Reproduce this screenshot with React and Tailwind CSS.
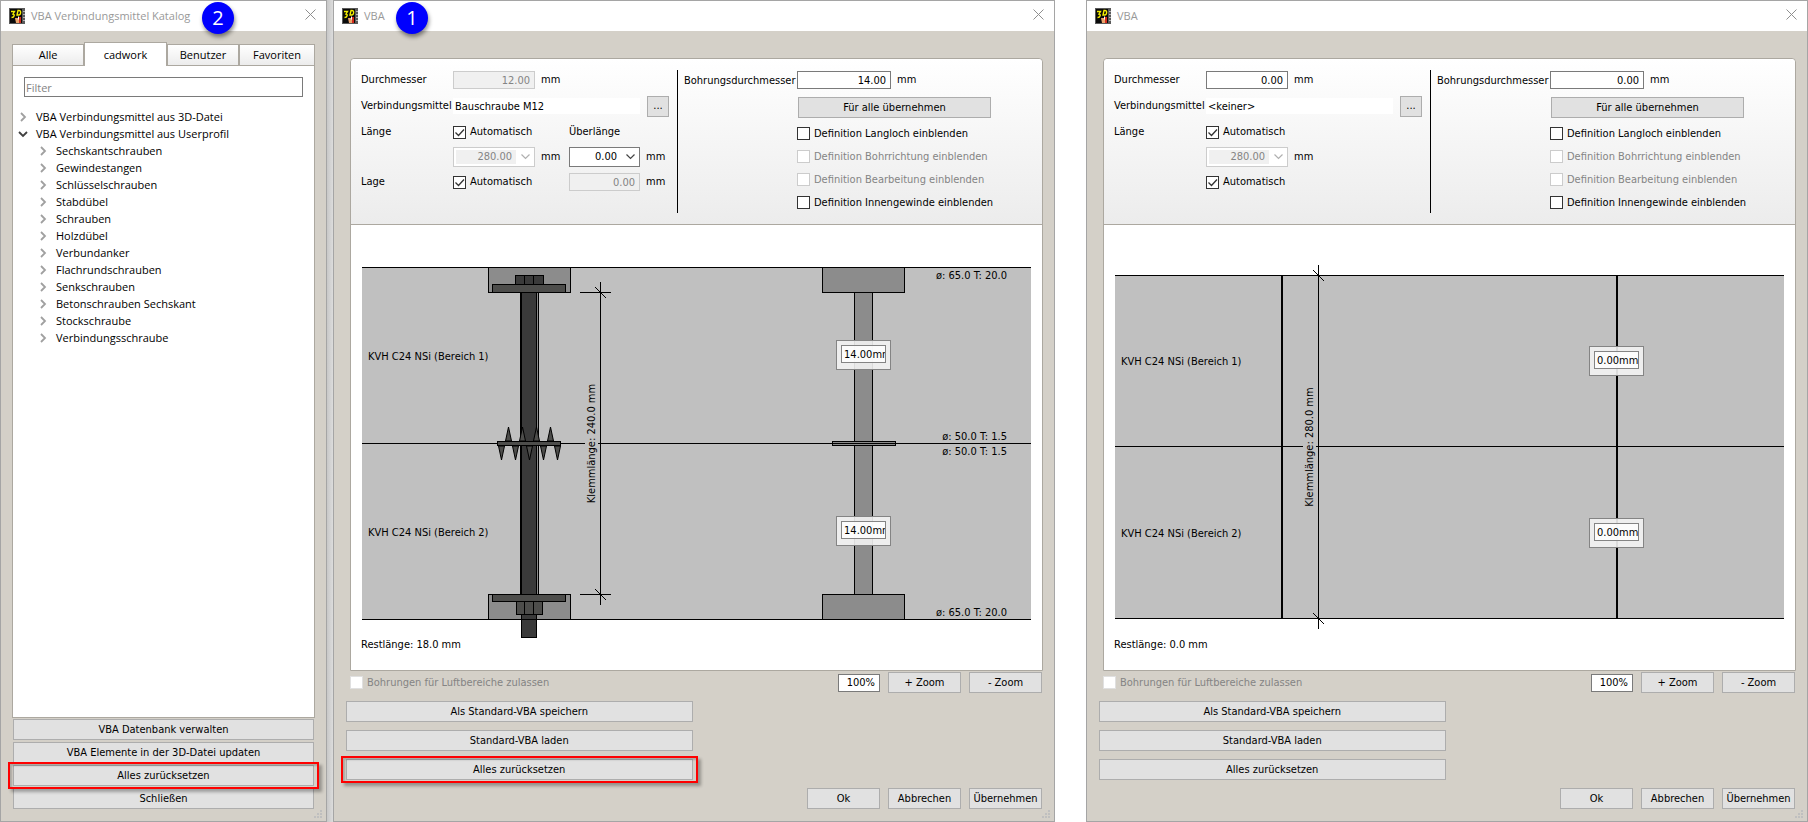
import React, { useState } from 'react';
import clsx from 'clsx';

const TREE_ITEMS = [
  'Sechskantschrauben',
  'Gewindestangen',
  'Schlüsselschrauben',
  'Stabdübel',
  'Schrauben',
  'Holzdübel',
  'Verbundanker',
  'Flachrundschrauben',
  'Senkschrauben',
  'Betonschrauben Sechskant',
  'Stockschraube',
  'Verbindungsschraube',
];

const TABS = [
  { name: 'Alle', width: 'flex-[72]' },
  { name: 'cadwork', width: 'flex-[83]' },
  { name: 'Benutzer', width: 'flex-[72]' },
  { name: 'Favoriten', width: 'flex-[76]' },
];

const AppIcon = () => (
  <svg width="16" height="16" viewBox="0 0 16 16" className="shrink-0" aria-hidden="true">
    <rect width="16" height="16" fill="#5a5a5a" />
    <rect x="1" y="1" width="12" height="14" fill="#0a0a0a" />
    <path d="M14 3.5h2M14 6.5h2M14 9.5h2M14 12.5h2" stroke="#b5b5b5" />
    <path d="M2 3.500h3.500L4 6c2 0 1.500 3.500-1.500 3.500M9 2.500h1c2.500 0 2 4.500-.5 4.500H8z" fill="none" stroke="#f5ee00" strokeWidth="1.400" />
    <path d="M6 10h4v5H7z" fill="#e9a36b" />
    <path d="M10 9h2v6h-2z" fill="#d42a1c" />
    <path d="M9.500 8.500v3" stroke="#fff" />
  </svg>
);

const CloseIcon = () => (
  <svg width="11" height="11" viewBox="0 0 11 11" aria-hidden="true">
    <path d="M.5.5l10 10M10.500.5l-10 10" stroke="#8f8f8f" fill="none" />
  </svg>
);

const Chevron = ({ open }) => (
  <svg width="10" height="10" viewBox="0 0 10 10" className="shrink-0" aria-hidden="true">
    {open ? (
      <path d="M1 3l4 4 4-4" fill="none" stroke="#404040" strokeWidth="1.800" />
    ) : (
      <path d="M3 1l4 4-4 4" fill="none" stroke="#a0a0a0" strokeWidth="1.800" />
    )}
  </svg>
);

const Grip = () => (
  <svg width="9" height="9" viewBox="0 0 9 9" className="absolute right-[3px] bottom-[2px]" aria-hidden="true">
    <path d="M6 0h2v2H6zM3 3h2v2H3zM6 3h2v2H6zM0 6h2v2H0zM3 6h2v2H3zM6 6h2v2H6z" fill="#bfbfbf" />
  </svg>
);

const Button = ({ children, className }) => (
  <button
    type="button"
    className={clsx('h-[21px] border border-[#adadad] bg-[#e1e1e1] text-center whitespace-nowrap hover:bg-[#e5f1fb]', className)}
  >
    {children}
  </button>
);

/* Red frame that marks a button */
const Highlight = ({ children }) => (
  <div className="relative flex flex-col">
    {children}
    <div className="pointer-events-none absolute -inset-x-[5px] -inset-y-[3px] border-2 border-[#fe0000] shadow-[3px_3px_3px_rgba(0,0,0,0.3),inset_2px_2px_2px_rgba(0,0,0,0.2)]" />
  </div>
);

const Badge = ({ children, className }) => (
  <span
    className={clsx(
      'absolute top-px flex size-8 items-center justify-center rounded-full bg-[#0000fe] font-["Open_Sans",sans-serif] text-xl text-white shadow-[1px_3px_4px_rgba(0,0,0,0.45)]',
      className
    )}
  >
    {children}
  </span>
);

const Window = ({ title, badge, badgeClass, children }) => (
  <section className="relative flex min-w-0 flex-col border border-[#a5a5a5] bg-[#d4d0c8]">
    <header className="relative flex h-[30px] shrink-0 items-center gap-[6px] bg-white pr-[10px] pl-2">
      <AppIcon />
      <h1 className="flex-1 font-['Open_Sans',sans-serif] whitespace-nowrap text-[#999]">{title}</h1>
      <button type="button" aria-label="Schließen" className="pb-1">
        <CloseIcon />
      </button>
      {badge && <Badge className={badgeClass}>{badge}</Badge>}
    </header>
    {children}
    <Grip />
  </section>
);

const Check = ({ label, disabled, defaultChecked, pale }) => (
  <label className={clsx('flex items-center gap-1 whitespace-nowrap', disabled && 'text-[#848484]')}>
    <span className="relative size-[13px] shrink-0">
      <input
        type="checkbox"
        disabled={disabled}
        defaultChecked={defaultChecked}
        className={clsx(
          'peer block size-[13px] appearance-none border bg-white',
          pale ? 'border-[#e0e0e0]' : disabled ? 'border-[#cccccc]' : 'border-[#333]'
        )}
      />
      <svg viewBox="0 0 13 13" className="pointer-events-none absolute inset-0 hidden peer-checked:block" aria-hidden="true">
        <path d="M2.500 6.500l3 3 5.500-6" fill="none" stroke="#333" strokeWidth="1.300" />
      </svg>
    </span>
    {label}
  </label>
);

const NumberBox = ({ id, label, value, disabled, className }) => (
  <input
    id={id}
    aria-label={label}
    type="text"
    defaultValue={value}
    disabled={disabled}
    className={clsx(
      'h-[18px] border pr-1 text-right',
      disabled ? 'border-[#cccccc] bg-[#f0f0f0] text-[#848484]' : 'border-[#7a7a7a] bg-white',
      className
    )}
  />
);

const Combo = ({ label, value, disabled, className }) => (
  <span className={clsx('relative flex h-5 border bg-white p-[2px]', disabled ? 'border-[#cccccc]' : 'border-[#7a7a7a]', className)}>
    <select
      aria-label={label}
      disabled={disabled}
      className={clsx(
        'mr-4 flex-1 appearance-none pr-1 leading-[14px] [text-align-last:right] opacity-100',
        disabled ? 'bg-[#f0f0f0] text-[#848484]' : 'bg-white'
      )}
    >
      <option>{value}</option>
    </select>
    <svg width="9" height="6" viewBox="0 0 9 6" className="pointer-events-none absolute top-[6px] right-1" aria-hidden="true">
      <path d="M.5.5l4 4 4-4" fill="none" stroke={disabled ? '#b0b0b0' : '#444'} strokeWidth="1.200" />
    </svg>
  </span>
);

const Region = ({ y, children }) => (
  <text x="17" y={y}>{children}</text>
);

/* Vertical dimension line with its slashes, text reads bottom to top */
const Dimension = ({ x, top, bottom, middle, flags, children }) => (
  <g>
    <rect x={x - 15.5} y={middle - 56} width="13" height="112" fill="#c0c0c0" stroke="none" />
    <path d={`M${x} ${top - 10.5}V${bottom + 10.5}`} />
    {[top, bottom].map((y) => (
      <g key={y}>
        {flags && <path d={`M${x - 20.5} ${y}h31`} />}
        <path d={`M${x - 5.5} ${y - 5.5}l11 11`} />
      </g>
    ))}
    <text transform={`translate(${x - 5.5} ${middle}) rotate(-90)`} textAnchor="middle">{children}</text>
  </g>
);

const BoltDrawing = () => (
  <>
    <rect x="11" y="42" width="669" height="353" fill="#c0c0c0" stroke="none" />
    <path d="M11 42.500h669M11 218.500h669" />

    {/* bolt */}
    <rect x="137.500" y="42.500" width="82" height="25" fill="#8c8c8c" />
    <rect x="137.500" y="369.500" width="82" height="25" fill="#8c8c8c" />
    <rect x="169.500" y="67.500" width="18" height="302" fill="#8c8c8c" />
    <rect x="170.500" y="67.500" width="15" height="345" fill="#3a3a3a" />
    <rect x="164.500" y="50.500" width="28" height="9" fill="#3a3a3a" />
    <path d="M173.500 50.500v9M182.500 50.500v9" />
    <rect x="141.500" y="59.500" width="73" height="8" fill="#4d4d4b" />
    <rect x="141.500" y="369.500" width="73" height="7" fill="#4d4d4b" />
    <rect x="165.500" y="376.500" width="26" height="13" fill="#4d4d4b" />
    <path d="M173.500 376.500v13M182.500 376.500v13" />

    {/* toothed plate */}
    {[157.5, 171.5, 185.5, 199.5].map((x) => (
      <path key={x} d={`M${x - 3} 216L${x} 202l3 14z`} fill="#4d4d4b" />
    ))}
    {[150.5, 164.5, 178.5, 192.5, 206.5].map((x) => (
      <path key={x} d={`M${x - 3} 221l3 14 3-14z`} fill="#4d4d4b" />
    ))}
    <rect x="146.500" y="216.500" width="63" height="4" fill="#4d4d4b" />
    <path d="M11 394.500h669" />

    {/* drilling */}
    <rect x="503.500" y="67.500" width="18" height="302" fill="#8c8c8c" />
    <rect x="471.500" y="42.500" width="82" height="25" fill="#8c8c8c" />
    <rect x="471.500" y="369.500" width="82" height="25" fill="#8c8c8c" />
    <rect x="481.500" y="216.500" width="63" height="4" fill="#8c8c8c" />
    <path d="M481.500 218.500h63" />

    <Dimension x={249.5} top={67.5} bottom={369.5} middle={218.5} flags>
      Klemmlänge: 240.0 mm
    </Dimension>
    <Region y="135">KVH C24 NSi (Bereich 1)</Region>
    <Region y="311">KVH C24 NSi (Bereich 2)</Region>
    <g textAnchor="end">
      <text x="656" y="54">ø: 65.0 T: 20.0</text>
      <text x="656" y="215">ø: 50.0 T: 1.5</text>
      <text x="656" y="230">ø: 50.0 T: 1.5</text>
      <text x="656" y="391">ø: 65.0 T: 20.0</text>
    </g>
  </>
);

const EmptyDrawing = () => (
  <>
    <rect x="11" y="50" width="669" height="344" fill="#c0c0c0" stroke="none" />
    <path d="M11 50.500h669M11 221.500h669M11 393.500h669" />
    <path d="M178 50v344M513 50v344" strokeWidth="2" />
    <Dimension x={214.5} top={50.5} bottom={393.5} middle={222}>
      Klemmlänge: 280.0 mm
    </Dimension>
    <Region y="140">KVH C24 NSi (Bereich 1)</Region>
    <Region y="312">KVH C24 NSi (Bereich 2)</Region>
  </>
);

const HoleInput = ({ value, label, className }) => (
  <div className={clsx('absolute left-[70.2%] h-[30px] w-[55px] border border-[#848484] bg-[#f3f3f3]/90 p-1', className)}>
    <input
      type="text"
      aria-label={label}
      defaultValue={value}
      className="block h-[18px] w-[45px] border border-[#848484] bg-white/80 pl-[2px]"
    />
  </div>
);

const VbaWindow = ({ id, filled, badge }) => {
  const hole = filled ? '14.00mm' : '0.00mm';

  return (
    <Window title="VBA" badge={badge} badgeClass="left-[62px]">
      <div className="flex flex-1 flex-col pt-[27px] pr-[11px] pb-3 pl-4">
        <div className="flex flex-1 flex-col rounded-t border border-[#aca8a0] bg-white">
          <div className="flex h-[166px] rounded-t border-b border-[#aca8a0] bg-linear-to-b from-white to-[#ececec] pl-[10px]">
            <div className="grid w-[316px] grid-cols-[92px_116px_1fr] grid-rows-[26px_26px_26px_24px_26px] content-start items-center pt-2 whitespace-nowrap">
              <label htmlFor={`${id}-d`}>Durchmesser</label>
              <div className="col-span-2 flex items-center gap-[6px]">
                <NumberBox id={`${id}-d`} value={filled ? '12.00' : '0.00'} disabled={filled} className="w-[82px]" />
                mm
              </div>

              <label htmlFor={`${id}-v`}>Verbindungsmittel</label>
              <div className="col-span-2 flex items-center gap-[7px]">
                <input
                  id={`${id}-v`}
                  type="text"
                  readOnly
                  defaultValue={filled ? 'Bauschraube M12' : '<keiner>'}
                  className="h-4 w-[187px] bg-white pl-[2px]"
                />
                <Button className="w-[22px]">...</Button>
              </div>

              <span>Länge</span>
              <Check label="Automatisch" defaultChecked />
              <span>{filled && 'Überlänge'}</span>

              <div className="col-start-2 flex items-center gap-[6px]">
                <Combo label="Länge" value="280.00" disabled className="w-[82px]" />
                mm
              </div>
              <div className="flex items-center gap-[6px]">
                {filled && (
                  <>
                    <Combo label="Überlänge" value="0.00" className="w-[71px]" />
                    mm
                  </>
                )}
              </div>

              <span>{filled && 'Lage'}</span>
              <Check label="Automatisch" defaultChecked />
              <div className="flex items-center gap-[6px]">
                {filled && (
                  <>
                    <NumberBox label="Lage" value="0.00" disabled className="w-[71px]" />
                    mm
                  </>
                )}
              </div>
            </div>

            <div className="mt-[11px] h-[143px] w-px bg-black" />

            <div className="flex flex-1 items-start pt-3 pl-[6px]">
              <label htmlFor={`${id}-b`} className="w-[113px] leading-[20px] whitespace-nowrap">Bohrungsdurchmesser</label>
              <div className="flex flex-col">
                <div className="flex items-center gap-[6px]">
                  <NumberBox id={`${id}-b`} value={filled ? '14.00' : '0.00'} className="w-[94px]" />
                  mm
                </div>
                <Button className="mt-2 ml-px w-[193px]">Für alle übernehmen</Button>
                <div className="mt-[9px] flex flex-col gap-[10px] leading-[13px]">
                  <Check label="Definition Langloch einblenden" />
                  <Check label="Definition Bohrrichtung einblenden" disabled />
                  <Check label="Definition Bearbeitung einblenden" disabled />
                  <Check label="Definition Innengewinde einblenden" />
                </div>
              </div>
            </div>
          </div>

          <div className="relative flex-1">
            <svg viewBox="0 0 691 445" className="block w-full fill-black" stroke="none">
              <g stroke="#000" fill="none" className="[&_text]:fill-black [&_text]:stroke-none">
                {filled ? <BoltDrawing /> : <EmptyDrawing />}
                <text x="10" y="423">{filled ? 'Restlänge: 18.0 mm' : 'Restlänge: 0.0 mm'}</text>
              </g>
            </svg>
            <HoleInput label="Bohrung Bereich 1" value={hole} className={filled ? 'top-[115px]' : 'top-[121px]'} />
            <HoleInput label="Bohrung Bereich 2" value={hole} className={filled ? 'top-[291px]' : 'top-[293px]'} />
          </div>
        </div>

        <div className="flex items-center gap-2 pt-px">
          <div className="flex-1">
            <Check label="Bohrungen für Luftbereiche zulassen" disabled pale />
          </div>
          <NumberBox label="Zoom" value="100%" className="w-[42px]" />
          <Button className="w-[73px]">+ Zoom</Button>
          <Button className="mr-px w-[73px]">- Zoom</Button>
        </div>

        <div className="-ml-1 flex w-1/2 flex-col gap-2 pt-2">
          <Button>Als Standard-VBA speichern</Button>
          <Button>Standard-VBA laden</Button>
          {filled ? (
            <Highlight>
              <Button>Alles zurücksetzen</Button>
            </Highlight>
          ) : (
            <Button>Alles zurücksetzen</Button>
          )}
        </div>

        <div className="mr-px flex justify-end gap-2 pt-2">
          <Button className="w-[73px]">Ok</Button>
          <Button className="w-[73px]">Abbrechen</Button>
          <Button className="w-[73px]">Übernehmen</Button>
        </div>
      </div>
    </Window>
  );
};

const CatalogWindow = () => {
  const [tab, setTab] = useState('cadwork');

  return (
    <Window title="VBA Verbindungsmittel Katalog" badge="2" badgeClass="left-[201px]">
      <div className="flex flex-1 flex-col px-[11px] pt-[11px] pb-3">
        <div className="flex items-end font-['Open_Sans',sans-serif]" role="tablist">
          {TABS.map(({ name, width }) => (
            <button
              key={name}
              type="button"
              role="tab"
              aria-selected={tab === name}
              onClick={() => setTab(name)}
              className={clsx(
                'min-w-0 border border-b-0 border-[#aca8a0]',
                width,
                tab === name ? 'relative -mb-px h-6 bg-white' : 'h-[21px] bg-linear-to-b from-white to-[#ececec]'
              )}
            >
              {name}
            </button>
          ))}
        </div>

        <div className="flex-1 border border-[#aca8a0] bg-white px-[5px] pt-[11px] font-['Open_Sans',sans-serif]">
          <input
            type="text"
            aria-label="Filter"
            placeholder="Filter"
            className="mx-[6px] block h-5 w-[calc(100%-12px)] border border-[#7a7a7a] pl-px placeholder:text-[#848484]"
          />
          <ul className="pt-[11px] leading-[17px]">
            <li className="flex items-center gap-2">
              <Chevron />
              VBA Verbindungsmittel aus 3D-Datei
            </li>
            <li>
              <div className="flex items-center gap-2">
                <Chevron open />
                VBA Verbindungsmittel aus Userprofil
              </div>
              <ul className="pl-5">
                {TREE_ITEMS.map((item) => (
                  <li key={item} className="flex items-center gap-2">
                    <Chevron />
                    {item}
                  </li>
                ))}
              </ul>
            </li>
          </ul>
        </div>

        <div className="flex flex-col gap-[2px] px-px pt-px">
          <Button>VBA Datenbank verwalten</Button>
          <Button>VBA Elemente in der 3D-Datei updaten</Button>
          <Highlight>
            <Button>Alles zurücksetzen</Button>
          </Highlight>
          <Button>Schließen</Button>
        </div>
      </div>
    </Window>
  );
};

export default function App() {
  return (
    <main className="grid min-h-screen grid-cols-[327fr_6px_722fr_31px_722fr] bg-white font-['DejaVu_Sans_Condensed','DejaVu_Sans',sans-serif] text-[11px] leading-[14px] text-black">
      <CatalogWindow />
      <div className="bg-linear-to-r from-[#c8c8c8] to-[#dcdcdc]" />
      <VbaWindow id="vba1" filled badge="1" />
      <div />
      <VbaWindow id="vba2" />
    </main>
  );
}
